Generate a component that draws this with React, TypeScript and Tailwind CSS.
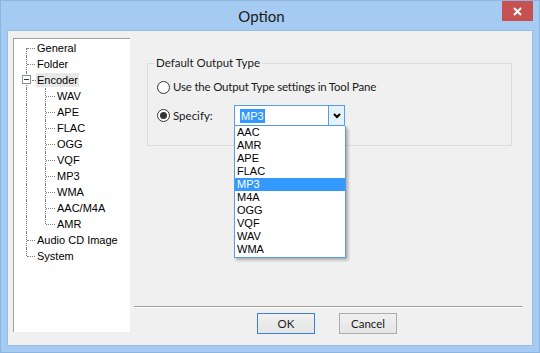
import React from 'react'

type TreeItem = {
  label: string
  level: 0 | 1
  first?: boolean
  last?: boolean
  toggle?: boolean
  selected?: boolean
}

const treeItems: TreeItem[] = [
  { label: 'General', level: 0, first: true },
  { label: 'Folder', level: 0 },
  { label: 'Encoder', level: 0, toggle: true, selected: true },
  { label: 'WAV', level: 1 },
  { label: 'APE', level: 1 },
  { label: 'FLAC', level: 1 },
  { label: 'OGG', level: 1 },
  { label: 'VQF', level: 1 },
  { label: 'MP3', level: 1 },
  { label: 'WMA', level: 1 },
  { label: 'AAC/M4A', level: 1 },
  { label: 'AMR', level: 1, last: true },
  { label: 'Audio CD Image', level: 0 },
  { label: 'System', level: 0, last: true }
]

const formats = ['AAC', 'AMR', 'APE', 'FLAC', 'MP3', 'M4A', 'OGG', 'VQF', 'WAV', 'WMA']

const dots = 'border-dotted border-[#808080]'

const TreeRow: React.FC<{ item: TreeItem }> = ({ item }) => {
  const rootLine = item.first
    ? 'top-1/2 bottom-0'
    : item.level === 0 && item.last
      ? 'top-0 h-1/2'
      : 'top-0 bottom-0'

  return (
    <div className="relative flex h-[16px] items-center">
      <span className={`absolute left-[12px] border-l ${dots} ${rootLine}`} />

      {item.level === 0 && !item.toggle && (
        <span className={`absolute left-[13px] top-1/2 w-[8px] border-t ${dots}`} />
      )}

      {item.toggle && (
        <>
          <span className="absolute left-[8px] top-[3px] flex h-[9px] w-[9px] items-center justify-center border border-[#919191] bg-white">
            <span className="h-px w-[5px] bg-[#1e395b]" />
          </span>
          <span className={`absolute left-[18px] top-1/2 w-[4px] border-t ${dots}`} />
        </>
      )}

      {item.level === 1 && (
        <>
          <span
            className={`absolute left-[31px] border-l ${dots} ${item.last ? 'top-0 h-1/2' : 'top-0 bottom-0'}`}
          />
          <span className={`absolute left-[32px] top-1/2 w-[9px] border-t ${dots}`} />
        </>
      )}

      <span
        className={`${item.level === 0 ? 'ml-[22px]' : 'ml-[42px]'} px-px leading-[14px] ${item.selected ? 'bg-[#e8e8e8]' : ''}`}
      >
        {item.label}
      </span>
    </div>
  )
}

const Radio: React.FC<{ checked?: boolean }> = ({ checked }) => (
  <span className="flex h-[13px] w-[13px] shrink-0 items-center justify-center rounded-full border border-[#333333] bg-white">
    {checked && <span className="h-[7px] w-[7px] rounded-full bg-[#333333]" />}
  </span>
)

export default function App() {
  return (
    <div className="flex h-[353px] w-[540px] flex-col border border-[#8fb4e0] bg-[#a5cbf3] font-['Liberation_Sans',Arial,sans-serif] text-[#000]">
      <div className="relative flex h-[29px] shrink-0 items-center justify-center pr-[17px] pt-px">
        <span className="font-['Lato',sans-serif] text-[15px] text-[#1a1a1a]">Option</span>
        <button
          type="button"
          className="absolute right-[6px] top-0 flex h-[20px] w-[31px] items-center justify-center bg-[#c75050]"
        >
          <svg width="9" height="9" viewBox="0 0 9 9">
            <path d="M1 1 L8 8 M8 1 L1 8" stroke="#fff" strokeWidth="2" />
          </svg>
        </button>
      </div>

      <div className="mx-[6px] flex h-[316px] border border-[#98bde6] bg-[#f0f0f0]">
        <div className="ml-[5px] mt-[7px] h-[294px] w-[117px] shrink-0 border-l border-t border-[#a0a0a0] bg-white pt-px text-[11px] text-[#000]">
          {treeItems.map(item => (
            <TreeRow key={item.label} item={item} />
          ))}
        </div>

        <div className="flex flex-1 flex-col pl-[4px] pt-[24px] font-['Lato',sans-serif] text-[11px] text-[#1a1a1a]">
          <fieldset className="ml-[13px] w-[365px] border border-[#dcdcdc] pb-[19px] pl-[9px]">
            <legend className="ml-[-3px] px-[2px] text-[11.5px] leading-[16px]">Default Output Type</legend>

            <div className="mt-[8px] flex h-[16px] items-center gap-[3px]">
              <Radio />
              <span className="text-[11.5px] tracking-[-0.2px]">Use the Output Type settings in Tool Pane</span>
            </div>

            <div className="mt-[10px] flex h-[21px] items-center">
              <div className="flex w-[77px] items-center gap-[3px]">
                <Radio checked />
                <span className="text-[11.5px]">Specify:</span>
              </div>

              <div className="relative h-[21px] w-[111px] font-['Liberation_Sans',Arial,sans-serif] text-[#000]">
                <div className="flex h-full border border-[#569de5] bg-white">
                  <div className="flex flex-1 items-center pl-[5px]">
                    <span className="bg-[#3399ff] px-px text-[11px] leading-[14px] text-white">MP3</span>
                  </div>
                  <div className="flex w-[16px] items-center justify-center border-l border-[#569de5] bg-[#e5f1fb]">
                    <svg width="8" height="6" viewBox="0 0 8 6">
                      <path d="M1 1 L4 4 L7 1" stroke="#000" strokeWidth="2" fill="none" />
                    </svg>
                  </div>
                </div>

                <ul className="absolute left-0 top-[21px] z-10 w-[112px] border border-t-0 border-[#569de5] bg-white pb-px text-[11px] shadow-[2px_2px_3px_rgba(0,0,0,0.3)]">
                  {formats.map(f => (
                    <li
                      key={f}
                      className={`h-[13px] pl-[2px] leading-[13px] ${f === 'MP3' ? 'bg-[#3399ff] text-white' : ''}`}
                    >
                      {f}
                    </li>
                  ))}
                </ul>
              </div>
            </div>
          </fieldset>

          <div className="mt-[160px] w-[389px] border-b border-t border-b-white border-t-[#a0a0a0]" />

          <div className="mt-[5px] flex gap-[24px] pl-[123px]">
            <button
              type="button"
              className="h-[21px] w-[58px] border border-[#3c7fd8] bg-gradient-to-b from-[#f0f0f0] to-[#e5e5e5] text-[11.5px]"
            >
              OK
            </button>
            <button
              type="button"
              className="h-[21px] w-[58px] border border-[#acacac] bg-gradient-to-b from-[#f0f0f0] to-[#e5e5e5] text-[11.5px]"
            >
              Cancel
            </button>
          </div>
        </div>
      </div>
    </div>
  )
}
